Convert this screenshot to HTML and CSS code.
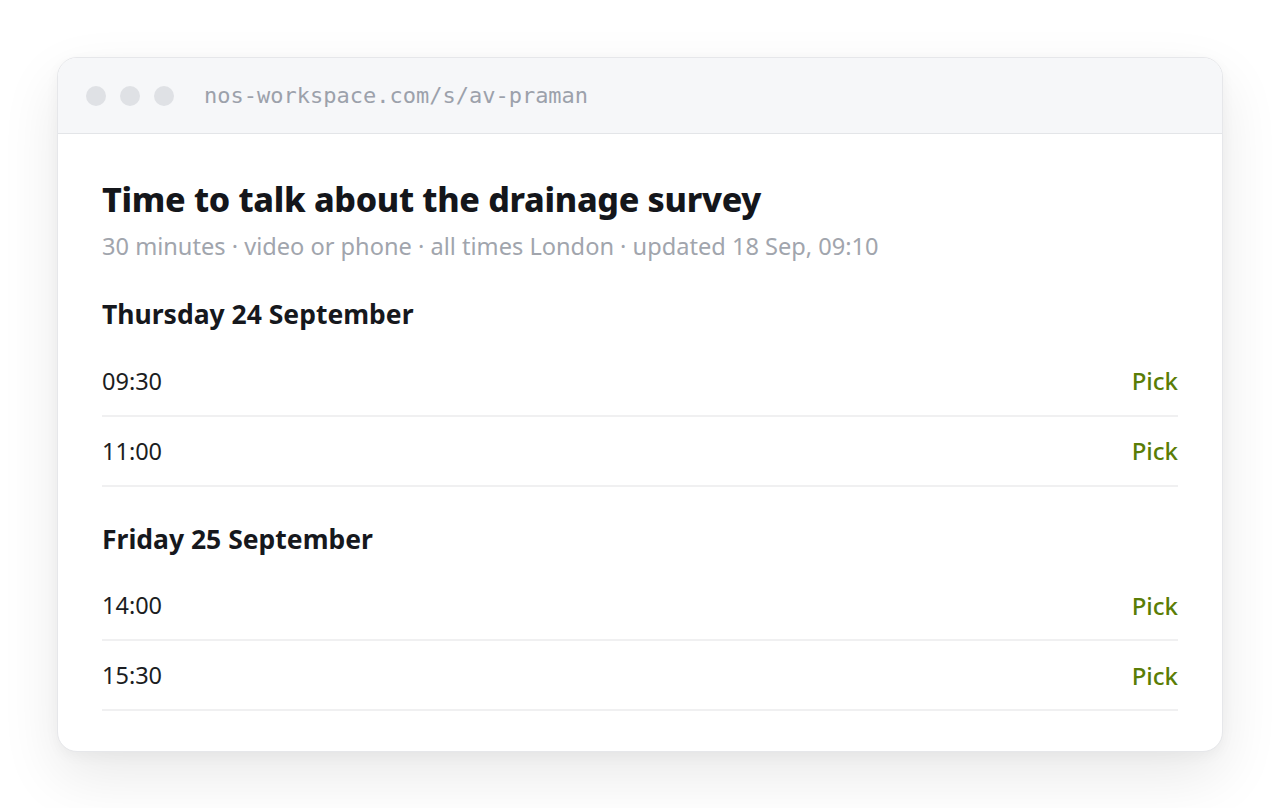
FILE: index.html
```html
<!DOCTYPE html>
<html>
<head>
    <title>Time to talk about the drainage survey</title>
    <link rel="stylesheet" href="styles.css">
</head>
<body>
    <div class="window">
        <div class="titlebar">
            <div class="dots">
                <span class="dot"></span>
                <span class="dot"></span>
                <span class="dot"></span>
            </div>
            <div class="url">nos-workspace.com/s/av-praman</div>
        </div>

        <div class="content">
            <h1>Time to talk about the drainage survey</h1>
            <p class="meta">30 minutes · video or phone · all times London · updated 18 Sep, 09:10</p>

            <div class="day">
                <h2>Thursday 24 September</h2>
                <div class="slot">
                    <span class="time">09:30</span>
                    <a href="#" class="pick">Pick</a>
                </div>
                <div class="slot">
                    <span class="time">11:00</span>
                    <a href="#" class="pick">Pick</a>
                </div>
            </div>

            <div class="day">
                <h2>Friday 25 September</h2>
                <div class="slot">
                    <span class="time">14:00</span>
                    <a href="#" class="pick">Pick</a>
                </div>
                <div class="slot">
                    <span class="time">15:30</span>
                    <a href="#" class="pick">Pick</a>
                </div>
            </div>
        </div>
    </div>
</body>
</html>
```

FILE: styles.css
```css
* {
    margin: 0;
    padding: 0;
    box-sizing: border-box;
}

html, body {
    min-height: 100%;
}

body {
    min-height: 100vh;
    background: #ffffff;
    color: #16181d;
    font-family: 'Noto Sans', 'Open Sans', sans-serif;
    padding: 57px 57px 0 57px;
}

.window {
    background: white;
    border: 1px solid #e6e7ea;
    border-radius: 20px;
    overflow: hidden;
    box-shadow: 0 24px 60px rgba(0, 0, 0, 0.09), 0 4px 14px rgba(0, 0, 0, 0.04);
}

.titlebar {
    display: flex;
    align-items: center;
    gap: 30px;
    height: 76px;
    padding: 0 28px;
    background: #f6f7f9;
    border-bottom: 1px solid #e3e5e8;
}

.dots {
    display: flex;
    gap: 14px;
}

.dot {
    width: 20px;
    height: 20px;
    border-radius: 50%;
    background: #dfe1e5;
}

.url {
    font-family: 'DejaVu Sans Mono', 'Liberation Mono', monospace;
    font-size: 22px;
    color: #9ca1ab;
}

.content {
    padding: 45px 44px 40px 44px;
}

h1 {
    font-size: 34px;
    font-weight: 800;
    line-height: 1.2;
    letter-spacing: -0.3px;
    color: #14161b;
}

.meta {
    margin-top: 10px;
    font-size: 23.6px;
    line-height: 1.4;
    color: #a1a5ad;
}

.day {
    margin-top: 35px;
}

.day:first-of-type {
    margin-top: 34px;
}

h2 {
    font-size: 26.5px;
    font-weight: 700;
    line-height: 1.35;
    color: #16181d;
    margin-bottom: 14px;
}

.slot {
    display: flex;
    justify-content: space-between;
    align-items: center;
    height: 70px;
    border-bottom: 2px solid #f0f0f1;
    font-size: 23.5px;
}

.time {
    color: #1b1d22;
}

.pick {
    color: #5a7d06;
    text-decoration: none;
    font-weight: 500;
    font-size: 24px;
}
```
